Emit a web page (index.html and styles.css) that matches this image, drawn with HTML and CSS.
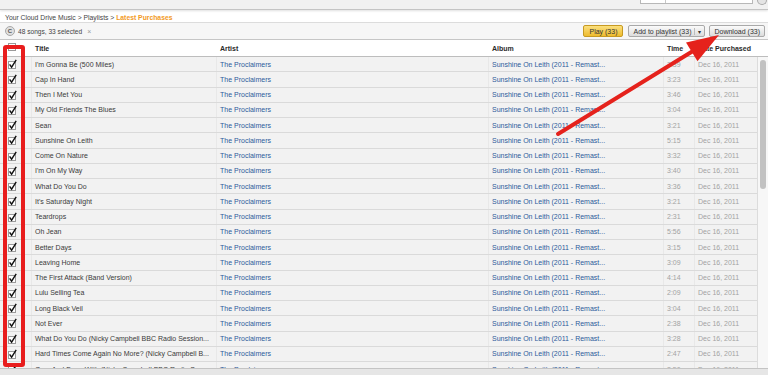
FILE: index.html
```html
<!DOCTYPE html>
<html lang="en">
<head>
  <meta charset="UTF-8">
  <title>Latest Purchases</title>
  <link rel="stylesheet" href="styles.css">
</head>
<body>

  <div class="topbar">
    <div class="search">
      <span class="search-scope"></span>
      <span class="search-field"></span>
    </div>
    <span class="search-btn"></span>
  </div>

  <div class="crumbs">Your Cloud Drive Music &gt; Playlists &gt; <span class="crumb-current">Latest Purchases</span></div>

  <div class="toolbar">
    <span class="count-icon">C</span>
    <span class="count">48 songs, 33 selected</span>
    <span class="clear">×</span>
    <div class="actions">
      <button class="btn btn-play">Play (33)</button>
      <button class="btn btn-add">Add to playlist (33) <span class="caret">▾</span></button>
      <button class="btn">Download (33)</button>
    </div>
  </div>

  <div class="list">
    <div class="row head">
      <div class="cell check"><svg class="box" width="9" height="10" viewBox="0 0 9 10"><rect x="0.5" y="2.5" width="7" height="7" fill="#fff" stroke="#9a9a9a"/></svg></div>
      <div class="cell">Title</div>
      <div class="cell">Artist</div>
      <div class="cell">Album</div>
      <div class="cell">Time</div>
      <div class="cell">Date Purchased</div>
    </div>
    <div class="list-body">
      <div id="rows" class="rows"></div>
      <div class="scroll"><div class="thumb"></div></div>
    </div>
  </div>

  <div class="footer"></div>

  <div class="red-box"></div>
  <svg class="arrow" width="768" height="375" viewBox="0 0 768 375">
    <line x1="558" y1="134" x2="693" y2="51" stroke="#e5221c" stroke-width="4" stroke-linecap="round"/>
    <polygon points="719,35 697.5,61.2 686,42.4" fill="#e5221c"/>
  </svg>

  <script>
    const songs = [
      ["I'm Gonna Be (500 Miles)", "3:39"],
      ["Cap In Hand", "3:23"],
      ["Then I Met You", "3:46"],
      ["My Old Friends The Blues", "3:04"],
      ["Sean", "3:21"],
      ["Sunshine On Leith", "5:15"],
      ["Come On Nature", "3:32"],
      ["I'm On My Way", "3:40"],
      ["What Do You Do", "3:36"],
      ["It's Saturday Night", "3:21"],
      ["Teardrops", "2:31"],
      ["Oh Jean", "5:56"],
      ["Better Days", "3:15"],
      ["Leaving Home", "3:09"],
      ["The First Attack (Band Version)", "4:14"],
      ["Lulu Selling Tea", "2:09"],
      ["Long Black Veil", "3:04"],
      ["Not Ever", "2:38"],
      ["What Do You Do (Nicky Campbell BBC Radio Session...", "3:28"],
      ["Hard Times Come Again No More? (Nicky Campbell B...", "2:47"],
      ["Over And Done With (Nicky Campbell BBC Radio Ses...", "2:50"]
    ];

    const checkSvg = '<svg class="box" width="9" height="10" viewBox="0 0 9 10">' +
      '<rect x="0.5" y="2.5" width="7" height="7" fill="#fff" stroke="#9a9a9a"/>' +
      '<path d="M1.6 5.4 L3.6 8.2 L8.2 0.8" fill="none" stroke="#111" stroke-width="1.4"/></svg>';

    const rows = document.getElementById("rows");

    songs.forEach(song => {
      const row = document.createElement("div");
      row.className = "row";
      row.innerHTML =
        '<div class="cell check">' + checkSvg + '</div>' +
        '<div class="cell title">' + song[0] + '</div>' +
        '<div class="cell link">The Proclaimers</div>' +
        '<div class="cell link">Sunshine On Leith (2011 - Remast...</div>' +
        '<div class="cell muted">' + song[1] + '</div>' +
        '<div class="cell muted">Dec 16, 2011</div>';
      rows.appendChild(row);
    });
  </script>

</body>
</html>
```

FILE: styles.css
```css
* {
  box-sizing: border-box;
}

body {
  margin: 0;
  width: 768px;
  height: 375px;
  overflow: hidden;
  font-family: "Liberation Sans", Arial, sans-serif;
  font-size: 7px;
  color: #333;
  background: #fff;
  position: relative;
}

.topbar {
  height: 10px;
  background: #f1f1f1;
  border-bottom: 1px solid #c4c4c4;
  box-shadow: 0 1px 2px rgba(0, 0, 0, 0.12);
  display: flex;
  justify-content: flex-end;
  align-items: flex-start;
  padding-right: 1px;
}

.search {
  display: flex;
  height: 4px;
  width: 113px;
  background: #fff;
  border: 1px solid #b8b8b8;
  border-top: none;
}

.search-scope {
  width: 25px;
  border-right: 1px solid #c8c8c8;
}

.search-btn {
  width: 10px;
  height: 5px;
  margin-left: 4px;
  border: 1px solid #aaa;
  border-top: none;
  border-radius: 0 0 5px 5px;
  background: #e4e4e4;
}

.crumbs {
  height: 13px;
  padding: 4px 0 0 5px;
  color: #444;
  border-bottom: 1px solid #dcdcdc;
  font-size: 6.8px;
}

.crumb-current {
  color: #f29a1e;
  font-weight: bold;
}

.toolbar {
  height: 17px;
  display: flex;
  align-items: center;
  padding: 0 3px 0 5px;
  background: #f6f6f6;
  border-bottom: 1px solid #c6c6c6;
}

.count-icon {
  width: 10px;
  height: 10px;
  border-radius: 50%;
  background: #e0e0e0;
  border: 1px solid #a8a8a8;
  font-size: 6px;
  font-weight: bold;
  color: #555;
  display: flex;
  align-items: center;
  justify-content: center;
}

.count {
  margin-left: 3px;
  color: #444;
  font-size: 6.6px;
}

.clear {
  margin-left: 5px;
  color: #999;
  font-size: 7px;
}

.actions {
  margin-left: auto;
  display: flex;
  gap: 4px;
}

.btn {
  font-family: "Liberation Sans", Arial, sans-serif;
  font-size: 7px;
  color: #333;
  height: 12px;
  padding: 0 4px;
  border: 1px solid #a9a9a9;
  border-radius: 2px;
  background: linear-gradient(#fbfbfb, #dcdcdc);
  display: flex;
  align-items: center;
}

.btn-play {
  background: linear-gradient(#fbe07e, #eebb2e);
  border-color: #c79a22;
  margin-right: 1px;
  padding: 0 5px;
}

.btn-add {
  padding-right: 0;
}

.caret {
  margin-left: 3px;
  padding: 0 3px;
  border-left: 1px solid #bdbdbd;
  font-size: 6px;
  color: #333;
}

.row {
  display: grid;
  grid-template-columns: 31px 185px 272px 175px 31px 1fr;
  height: 15.25px;
  align-items: stretch;
  background: #f2f2f2;
  border-bottom: 1px solid #dadada;
}

.row.head {
  height: 17px;
  background: #fff;
  border-bottom: 1px solid #bdbdbd;
  font-weight: bold;
  color: #2a2a2a;
}

.cell {
  display: flex;
  align-items: center;
  padding-left: 3px;
  white-space: nowrap;
  overflow: hidden;
  border-left: 1px solid #e8e8e8;
}

.cell.check {
  padding-left: 8px;
  border-left: none;
}

.row.head .cell {
  border-left-color: transparent;
}

.row.head .cell.check {
  align-items: flex-start;
  padding-top: 1px;
}

.title {
  color: #3a3a3a;
}

.link {
  color: #2d5b9b;
}

.muted {
  color: #a2a2a2;
}

.box {
  display: block;
}

.list-body {
  display: flex;
  height: 311px;
  overflow: hidden;
}

.rows {
  flex: 1;
}

.scroll {
  width: 11px;
  background: #f7f7f7;
  border-left: 1px solid #dcdcdc;
  padding: 3px 1px 0 2px;
}

.thumb {
  width: 6px;
  height: 129px;
  border-radius: 3px;
  background: #c2c2c2;
}

.footer {
  height: 7px;
  background: #e6e6e6;
  border-top: 1px solid #c4c4c4;
}

.red-box {
  position: absolute;
  left: 3px;
  top: 45px;
  width: 22px;
  height: 322px;
  border: 4px solid #e81d1d;
  border-radius: 3px;
}

.arrow {
  position: absolute;
  left: 0;
  top: 0;
  pointer-events: none;
}
```
